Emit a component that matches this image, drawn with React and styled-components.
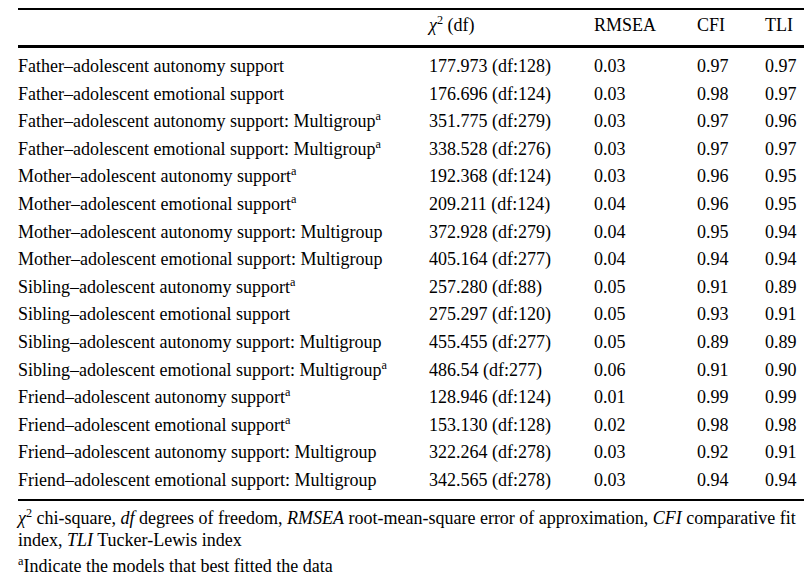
import React from "react";
import styled, { createGlobalStyle } from "styled-components";

const rows = [
  ["Father–adolescent autonomy support", false, "177.973 (df:128)", "0.03", "0.97", "0.97"],
  ["Father–adolescent emotional support", false, "176.696 (df:124)", "0.03", "0.98", "0.97"],
  ["Father–adolescent autonomy support: Multigroup", true, "351.775 (df:279)", "0.03", "0.97", "0.96"],
  ["Father–adolescent emotional support: Multigroup", true, "338.528 (df:276)", "0.03", "0.97", "0.97"],
  ["Mother–adolescent autonomy support", true, "192.368 (df:124)", "0.03", "0.96", "0.95"],
  ["Mother–adolescent emotional support", true, "209.211 (df:124)", "0.04", "0.96", "0.95"],
  ["Mother–adolescent autonomy support: Multigroup", false, "372.928 (df:279)", "0.04", "0.95", "0.94"],
  ["Mother–adolescent emotional support: Multigroup", false, "405.164 (df:277)", "0.04", "0.94", "0.94"],
  ["Sibling–adolescent autonomy support", true, "257.280 (df:88)", "0.05", "0.91", "0.89"],
  ["Sibling–adolescent emotional support", false, "275.297 (df:120)", "0.05", "0.93", "0.91"],
  ["Sibling–adolescent autonomy support: Multigroup", false, "455.455 (df:277)", "0.05", "0.89", "0.89"],
  ["Sibling–adolescent emotional support: Multigroup", true, "486.54 (df:277)", "0.06", "0.91", "0.90"],
  ["Friend–adolescent autonomy support", true, "128.946 (df:124)", "0.01", "0.99", "0.99"],
  ["Friend–adolescent emotional support", true, "153.130 (df:128)", "0.02", "0.98", "0.98"],
  ["Friend–adolescent autonomy support: Multigroup", false, "322.264 (df:278)", "0.03", "0.92", "0.91"],
  ["Friend–adolescent emotional support: Multigroup", false, "342.565 (df:278)", "0.03", "0.94", "0.94"],
];

const App = () => {
  return (
    <>
      <GlobalStyle />
      <Page>
        <Table>
          <HeaderRow>
            <Cell />
            <Cell>
              <Chi>χ</Chi>
              <Sup>2</Sup> (df)
            </Cell>
            <Cell>RMSEA</Cell>
            <Cell>CFI</Cell>
            <Cell>TLI</Cell>
          </HeaderRow>
          <Body>
            {rows.map(([label, best, chi, rmsea, cfi, tli]) => (
              <Row key={label}>
                <Cell>
                  {label}
                  {best && <Sup>a</Sup>}
                </Cell>
                <Cell>{chi}</Cell>
                <Cell>{rmsea}</Cell>
                <Cell>{cfi}</Cell>
                <Cell>{tli}</Cell>
              </Row>
            ))}
          </Body>
        </Table>
        <Notes>
          <Note>
            <Chi>χ</Chi>
            <Sup>2</Sup> chi-square, <i>df</i> degrees of freedom, <i>RMSEA</i>{" "}
            root-mean-square error of approximation, <i>CFI</i> comparative fit
            index, <i>TLI</i> Tucker-Lewis index
          </Note>
          <Note>
            <Sup>a</Sup>Indicate the models that best fitted the data
          </Note>
        </Notes>
      </Page>
    </>
  );
};

export default App;

const GlobalStyle = createGlobalStyle`
  body {
    margin: 0;
    background: #ffffff;
    color: #000000;
    font-family: "Liberation Serif", "Times New Roman", serif;
    overflow: hidden;
  }
`;

const Page = styled.div`
  width: 804px;
  height: 586px;
  padding: 8px 0 0 18px;
  box-sizing: border-box;
`;

const Table = styled.div`
  width: 800px;
  font-size: 18px;
  border-top: 2px solid #000;
  border-bottom: 2.5px solid #000;
`;

const Row = styled.div`
  display: grid;
  grid-template-columns: 411px 165px 103px 68px 1fr;
  height: 27.6px;
  line-height: 27.6px;
  white-space: nowrap;
`;

const HeaderRow = styled(Row)`
  height: 33px;
  padding-top: 2px;
  border-bottom: 3px solid #000;
`;

const Body = styled.div`
  padding: 5px 0 4.5px;
`;

const Cell = styled.div``;

const Chi = styled.i`
  font-style: italic;
`;

const Sup = styled.sup`
  font-size: 0.68em;
  line-height: 1;
  vertical-align: 0.6em;
`;

const Notes = styled.div`
  width: 786px;
  font-size: 18px;
  padding-top: 6px;
`;

const Note = styled.p`
  margin: 0 0 4px;
  line-height: 22px;
`;
